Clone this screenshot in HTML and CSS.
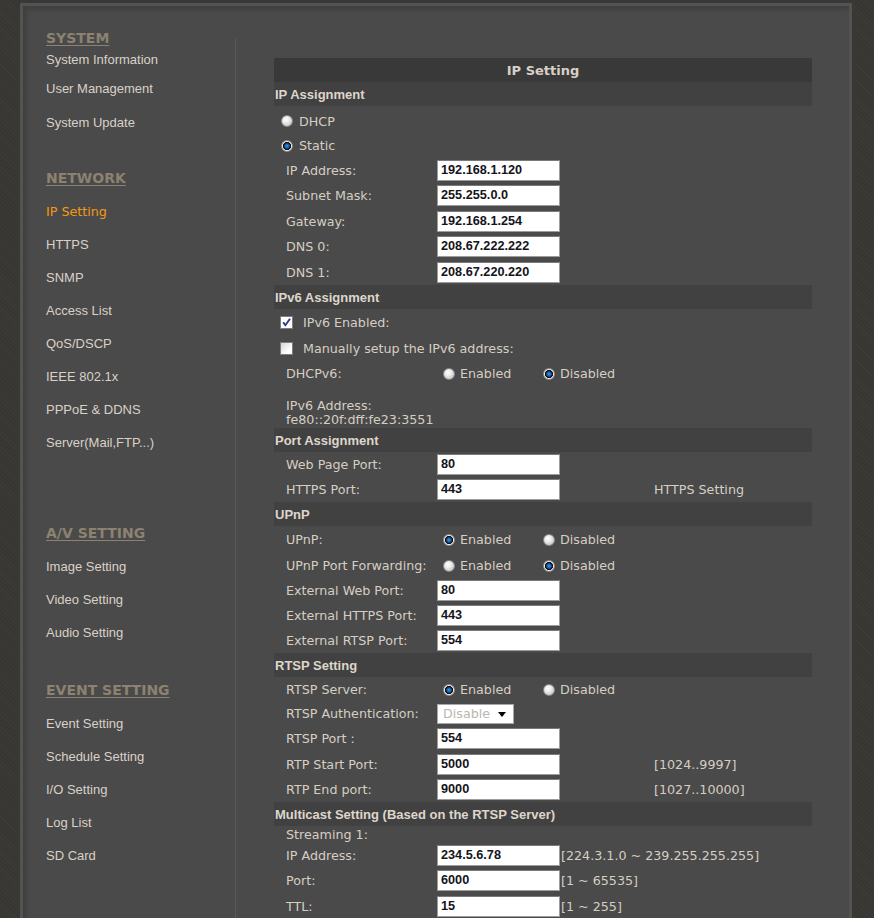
FILE: index.html
```html
<!DOCTYPE html>
<html>
<head>
<meta charset="utf-8">
<title>IP Setting</title>
<link rel="stylesheet" href="styles.css">
</head>
<body>
<div class="frame">
  <nav class="side">
    <div class="hd hd-sys">SYSTEM</div>
    <div class="it i26">System Information</div>
    <div class="it i32">User Management</div>
    <div class="it i36">System Update</div>

    <div class="hd hd-net">NETWORK</div>
    <div class="it active">IP Setting</div>
    <div class="it">HTTPS</div>
    <div class="it">SNMP</div>
    <div class="it">Access List</div>
    <div class="it">QoS/DSCP</div>
    <div class="it">IEEE 802.1x</div>
    <div class="it">PPPoE &amp; DDNS</div>
    <div class="it">Server(Mail,FTP...)</div>

    <div class="hd hd-av">A/V SETTING</div>
    <div class="it">Image Setting</div>
    <div class="it">Video Setting</div>
    <div class="it">Audio Setting</div>

    <div class="hd hd-ev">EVENT SETTING</div>
    <div class="it">Event Setting</div>
    <div class="it">Schedule Setting</div>
    <div class="it">I/O Setting</div>
    <div class="it">Log List</div>
    <div class="it">SD Card</div>
  </nav>

  <main class="main">
    <div class="tbl">
      <div class="title">IP Setting</div>

      <div class="sec">IP Assignment</div>
      <div class="row opt h27 pt3"><span class="rd"></span><span>DHCP</span></div>
      <div class="row opt h25"><span class="rd on"></span><span>Static</span></div>
      <div class="row h24"><span class="lab">IP Address:</span><span class="c2"><span class="in">192.168.1.120</span></span></div>
      <div class="row h26"><span class="lab">Subnet Mask:</span><span class="c2"><span class="in">255.255.0.0</span></span></div>
      <div class="row h26"><span class="lab">Gateway:</span><span class="c2"><span class="in">192.168.1.254</span></span></div>
      <div class="row h25"><span class="lab">DNS 0:</span><span class="c2"><span class="in">208.67.222.222</span></span></div>
      <div class="row h26"><span class="lab">DNS 1:</span><span class="c2"><span class="in">208.67.220.220</span></span></div>

      <div class="sec">IPv6 Assignment</div>
      <div class="row chk h27"><span class="cb on"><svg viewBox="0 0 11 11" width="11" height="11"><path d="M2.2 5.2 L4.4 8.2 L9 1.8" fill="none" stroke="#2a3a8a" stroke-width="1.9"/></svg></span><span>IPv6 Enabled:</span></div>
      <div class="row chk h25"><span class="cb"></span><span>Manually setup the IPv6 address:</span></div>
      <div class="row h25"><span class="lab">DHCPv6:</span><span class="rg"><span class="rd"></span><span>Enabled</span></span><span class="rg"><span class="rd on"></span><span>Disabled</span></span></div>
      <div class="addr">IPv6 Address:<br>fe80::20f:dff:fe23:3551</div>

      <div class="sec">Port Assignment</div>
      <div class="row h25"><span class="lab">Web Page Port:</span><span class="c2"><span class="in">80</span></span></div>
      <div class="row h25"><span class="lab">HTTPS Port:</span><span class="c2"><span class="in">443</span></span><span class="note">HTTPS Setting</span></div>

      <div class="sec">UPnP</div>
      <div class="row h27"><span class="lab">UPnP:</span><span class="rg"><span class="rd on"></span><span>Enabled</span></span><span class="rg"><span class="rd"></span><span>Disabled</span></span></div>
      <div class="row h25"><span class="lab">UPnP Port Forwarding:</span><span class="rg"><span class="rd"></span><span>Enabled</span></span><span class="rg"><span class="rd on"></span><span>Disabled</span></span></div>
      <div class="row h24"><span class="lab">External Web Port:</span><span class="c2"><span class="in">80</span></span></div>
      <div class="row h26"><span class="lab">External HTTPS Port:</span><span class="c2"><span class="in">443</span></span></div>
      <div class="row h25"><span class="lab">External RTSP Port:</span><span class="c2"><span class="in">554</span></span></div>

      <div class="sec">RTSP Setting</div>
      <div class="row h25"><span class="lab">RTSP Server:</span><span class="rg"><span class="rd on"></span><span>Enabled</span></span><span class="rg"><span class="rd"></span><span>Disabled</span></span></div>
      <div class="row h23"><span class="lab">RTSP Authentication:</span><span class="c2"><span class="sel">Disable<span class="arr"></span></span></span></div>
      <div class="row h26"><span class="lab">RTSP Port :</span><span class="c2"><span class="in">554</span></span></div>
      <div class="row h26"><span class="lab">RTP Start Port:</span><span class="c2"><span class="in">5000</span></span><span class="note">[1024..9997]</span></div>
      <div class="row h25"><span class="lab">RTP End port:</span><span class="c2"><span class="in">9000</span></span><span class="note">[1027..10000]</span></div>

      <div class="sec">Multicast Setting (Based on the RTSP Server)</div>
      <div class="row h17"><span class="lab">Streaming 1:</span></div>
      <div class="row h24"><span class="lab">IP Address:</span><span class="in">234.5.6.78</span><span class="rng">[224.3.1.0 ~ 239.255.255.255]</span></div>
      <div class="row h26"><span class="lab">Port:</span><span class="in">6000</span><span class="rng">[1 ~ 65535]</span></div>
      <div class="row h26"><span class="lab">TTL:</span><span class="in">15</span><span class="rng">[1 ~ 255]</span></div>
    </div>
  </main>
</div>
</body>
</html>
```
FILE: styles.css
```css
html, body {
  margin: 0;
  padding: 0;
}
body {
  background-color: #383633;
  background-image: repeating-linear-gradient(45deg, rgba(255,255,255,0.025) 0 1px, transparent 1px 3px);
  overflow: hidden;
  height: 918px;
}
.frame {
  box-sizing: border-box;
  margin: 3px 0 0 20px;
  width: 832px;
  min-height: 960px;
  background: #4a4a4a;
  border: 3px solid #535353;
  box-shadow: inset 3px 3px 5px rgba(0,0,0,0.18);
  display: flex;
  align-items: flex-start;
}
.side {
  box-sizing: border-box;
  width: 212px;
  padding: 23px 0 0 23px;
  flex: none;
}
.hd {
  font-family: "DejaVu Sans", Verdana, sans-serif;
  font-weight: bold;
  font-size: 14px;
  height: 18px;
  line-height: 18px;
  color: #8b8272;
  text-decoration: underline;
  text-underline-offset: 2px;
  margin-bottom: 8px;
}
.hd-sys { margin-bottom: 0; }
.hd-net { margin-top: 28px; }
.hd-av { margin-top: 65px; }
.hd-ev { margin-top: 32px; }
.it {
  font-family: "Liberation Sans", Arial, sans-serif;
  font-size: 13px;
  color: #d9d1c8;
  height: 33px;
  line-height: 34px;
  white-space: nowrap;
}
.it.i26 { height: 26px; line-height: 26px; }
.it.i32 { height: 32px; line-height: 32px; }
.it.i36 { height: 36px; line-height: 36px; }
.it.active {
  color: #f39a12;
  font-family: "DejaVu Sans", Verdana, sans-serif;
  font-size: 12.7px;
}
.main {
  box-sizing: border-box;
  margin-top: 32px;
  border-left: 1px solid #5b5757;
  padding: 20px 0 0 38px;
  min-height: 920px;
  flex: 1;
}
.tbl {
  width: 538px;
  font-family: "DejaVu Sans", Verdana, sans-serif;
  font-size: 12.7px;
  color: #d6cec4;
}
.title {
  height: 24px;
  line-height: 25px;
  background: #393939;
  text-align: center;
  font-weight: bold;
  font-size: 13px;
  color: #d8d0c6;
}
.sec {
  height: 24px;
  line-height: 25px;
  background: #414141;
  padding-left: 1px;
  font-family: "Liberation Sans", Arial, sans-serif;
  font-weight: bold;
  font-size: 13px;
  color: #ded6cc;
  white-space: nowrap;
}
.row {
  box-sizing: border-box;
  display: flex;
  align-items: center;
  padding-left: 12px;
  white-space: nowrap;
}
.h17 { height: 17px; }
.h23 { height: 23px; }
.h24 { height: 24px; }
.h25 { height: 25px; }
.h26 { height: 26px; }
.h27 { height: 27px; }
.pt3 { padding-top: 3px; }
.row.opt {
  padding-left: 7px;
  gap: 6px;
}
.row.chk {
  padding-left: 6px;
  gap: 10px;
}
.lab {
  width: 151px;
  flex: none;
}
.c2 {
  width: 217px;
  flex: none;
  display: flex;
  align-items: center;
}
.rg {
  width: 100px;
  flex: none;
  display: flex;
  align-items: center;
  gap: 5px;
}
.rg .rd { margin-left: 6px; }
.rd {
  box-sizing: border-box;
  width: 12px;
  height: 12px;
  flex: none;
  border-radius: 50%;
  border: 1px solid #8a8a8a;
  background: radial-gradient(circle at 40% 35%, #ffffff 0, #ececec 35%, #b5b5b5 100%);
}
.rd.on {
  border-color: #8a8a8a;
  background: radial-gradient(circle at 50% 50%, #3f9fe2 0, #1c6fba 1.5px, #0f4a86 2.5px, #0a2240 3px, #0c0c0c 3.5px, #2a2a2a 3.9px, #f2f2f2 4.4px, #cfcfcf 100%);
}
.cb {
  box-sizing: border-box;
  width: 13px;
  height: 13px;
  flex: none;
  border: 1px solid #7d7d7d;
  background: linear-gradient(135deg, #d6d6d6, #ffffff 70%);
  display: flex;
  align-items: center;
  justify-content: center;
}
.cb.on { background: #ffffff; }
.cb svg { display: block; }
.addr {
  box-sizing: border-box;
  height: 42px;
  padding: 13px 0 0 12px;
  line-height: 14px;
}
.in {
  box-sizing: border-box;
  display: block;
  width: 123px;
  height: 21px;
  line-height: 19px;
  flex: none;
  background: #ffffff;
  border: 1px solid #9c9c9c;
  border-top-color: #7a7a7a;
  padding-left: 3px;
  font-family: "Liberation Sans", Arial, sans-serif;
  font-weight: bold;
  font-size: 12.7px;
  color: #141420;
}
.sel {
  box-sizing: border-box;
  position: relative;
  display: block;
  width: 77px;
  height: 20px;
  line-height: 18px;
  background: #ffffff;
  border: 1px solid #a8a8a8;
  padding-left: 5px;
  color: #bdb5ad;
}
.arr {
  position: absolute;
  right: 7px;
  top: 7px;
  width: 0;
  height: 0;
  border-left: 4px solid transparent;
  border-right: 4px solid transparent;
  border-top: 5px solid #000000;
}
.note {
  flex: none;
}
.rng {
  margin-left: 1px;
  flex: none;
}
```
